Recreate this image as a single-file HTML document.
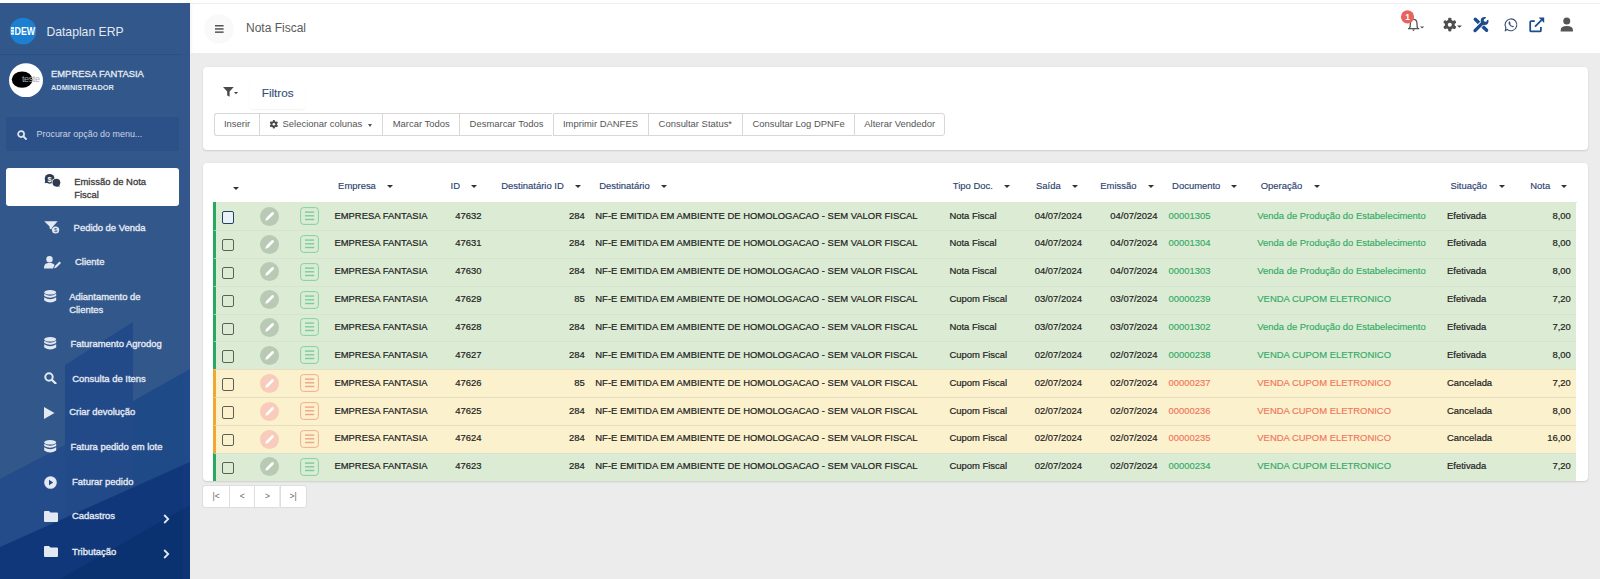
<!DOCTYPE html><html><head><meta charset="utf-8"><style>
*{box-sizing:border-box;margin:0;padding:0}
html,body{width:1600px;height:579px;overflow:hidden;background:#ececec;font-family:"Liberation Sans",sans-serif;position:relative}
.a{position:absolute;white-space:nowrap}
#top{left:0;top:0;width:1600px;height:3px;background:#fff}
#side{left:0;top:3px;width:190px;height:576px;background:#32588c;overflow:hidden}
#hdr{left:190px;top:2.5px;width:1410px;height:50px;background:#fff;border-top:1px solid #eeeeee;box-shadow:inset 4px 0 4px -3px rgba(0,0,0,.06)}
.panel{background:#fff;border-radius:4px;box-shadow:0 1px 2px rgba(0,0,0,.12),0 0 1px rgba(0,0,0,.08)}
.side-t{color:#e3e9f2;font-size:9.45px;-webkit-text-stroke:0.35px #e3e9f2}
.btn{top:113.2px;height:22.4px;border:1px solid #d7d7d7;border-right:none;background:#fff;color:#555;font-size:9.45px;line-height:19.4px;padding:0 9.5px}
.th{top:179.8px;font-size:9.45px;color:#2c4270;line-height:11px;-webkit-text-stroke:0.15px #2c4270}
.caret{width:0;height:0;border-left:3px solid transparent;border-right:3px solid transparent;border-top:3.5px solid #333}
.row{left:213px;width:1363px;height:27.85px}
.row.g{background:#dcecd4;border-left:3px solid #28a861}
.row.y{background:#fbf1cd;border-left:3px solid #f0a830}
.td{font-size:9.45px;color:#222;top:0;line-height:27.85px;margin-top:-0.6px;-webkit-text-stroke:0.2px #222}
.gt{color:#33aa66;-webkit-text-stroke:0.15px #33aa66}
.rt{color:#f2755c;-webkit-text-stroke:0.15px #f2755c}
</style></head><body>
<div class="a" id="top"></div>
<div class="a" id="side">
<svg class="a" style="left:0;top:-3px" width="190" height="579" viewBox="0 0 190 579">
<rect width="190" height="579" fill="#32578b"/>
<polygon points="65,365 133,322 133,579 65,579" fill="#234a88"/>
<polygon points="133,401 190,369 190,579 133,579" fill="#1f4a88"/>
<polygon points="0,479 65,445 65,579 0,579" fill="#254c8a"/>
<polygon points="0,547 190,462 190,579 0,579" fill="#10377a"/>
<polygon points="60,579 190,505 190,579" fill="#0b3270"/>
<rect x="182.5" y="0" width="7.5" height="579" fill="#3a4fa0" opacity="0.08"/>
</svg>
</div>
<svg class="a" style="left:0;top:0" width="50" height="50" viewBox="0 0 50 50"><circle cx="23" cy="31" r="13.3" fill="#1b80d2"/><rect x="10.9" y="27.1" width="3.1" height="7.6" fill="#eef4fb"/><rect x="10.9" y="29.3" width="3.1" height="0.6" fill="#1b80d2"/><rect x="10.9" y="31.8" width="3.1" height="0.6" fill="#1b80d2"/><text x="0" y="0" font-size="10.4" font-family="Liberation Sans" font-weight="bold" fill="#fff" transform="translate(14.5 34.65) scale(0.85 1)">DEW</text></svg>
<div class="a" style="left:46.4px;top:24.7px;font-size:12.2px;line-height:14px;color:#e2e9f3">Dataplan ERP</div>
<div class="a" style="left:0;top:53.5px;width:182px;height:1px;background:#2a5088"></div>
<svg class="a" style="left:9px;top:62.6px" width="34" height="34.5" viewBox="0 0 34 34.5"><circle cx="17" cy="17.2" r="17" fill="#fff"/><ellipse cx="13.1" cy="16.6" rx="10.3" ry="8.2" fill="#000"/><text x="13" y="19.4" font-size="9" font-family="Liberation Sans" fill="#a8a8a8" letter-spacing="-0.4">teste</text></svg>
<div class="a" style="left:51px;top:68px;font-size:9.42px;line-height:12px;color:#e6ecf4;-webkit-text-stroke:0.3px #e6ecf4">EMPRESA FANTASIA</div>
<div class="a" style="left:51px;top:82.5px;font-size:7.4px;font-weight:bold;line-height:10px;color:#dfe6f0">ADMINISTRADOR</div>
<div class="a" style="left:6px;top:117px;width:173px;height:34px;background:#2c5189;border-radius:2px"></div>
<svg class="a" style="left:16.5px;top:130px" width="10" height="10" viewBox="0 0 10 10"><circle cx="4.1" cy="4.1" r="3" fill="none" stroke="#dfe6f0" stroke-width="1.7"/><line x1="6.4" y1="6.4" x2="9" y2="9" stroke="#dfe6f0" stroke-width="1.9" stroke-linecap="round"/></svg>
<div class="a" style="left:36.5px;top:129px;font-size:8.95px;line-height:11px;color:#c9d4e3">Procurar opção do menu...</div>
<div class="a" style="left:6.2px;top:168px;width:172.5px;height:38px;background:#fff;border-radius:3px"></div>
<svg class="a" style="left:38px;top:168px" width="30" height="25" viewBox="0 0 30 25"><circle cx="11.65" cy="10.8" r="4.9" fill="#2f3b4f"/><path d="M7.5 12.5 L6.6 15.2 L10 14.5z" fill="#2f3b4f"/><circle cx="18.4" cy="14.6" r="4.6" fill="#fff"/><circle cx="18.4" cy="14.6" r="3.9" fill="#2f3b4f"/><path d="M20.5 17 L22.2 18.6 L17.5 18.4z" fill="#2f3b4f"/><text x="11.7" y="13.6" font-size="7.5" font-family="Liberation Sans" font-weight="bold" fill="#fff" text-anchor="middle">$</text></svg>
<div class="a" style="left:74.2px;top:175px;font-size:9.45px;line-height:13px;color:#3d3d3d;-webkit-text-stroke:0.3px #3d3d3d;white-space:normal;width:80px">Emissão de Nota Fiscal</div>
<div class="a side-t" style="left:73.6px;top:221.0px;line-height:13.6px">Pedido de Venda</div>
<svg class="a" style="left:44px;top:219.5px" width="17" height="15" viewBox="0 0 17 15"><path d="M0.2 1.2 H13.6 L9 6.5 V10.5 L5.6 8.5 V6.5z" fill="#e3e9f2"/><circle cx="11.6" cy="10" r="4.3" fill="#32578b"/><circle cx="11.6" cy="10" r="3.6" fill="#e3e9f2"/><text x="11.6" y="12.4" font-size="6" font-family="Liberation Sans" fill="#32578b" text-anchor="middle">$</text></svg>
<div class="a side-t" style="left:75px;top:255.1px;line-height:13.6px">Cliente</div>
<svg class="a" style="left:44px;top:255.5px" width="17" height="13" viewBox="0 0 17 13"><circle cx="5.5" cy="3.2" r="3.2" fill="#e3e9f2"/><path d="M0 12.5 C0 8 2 7 5.5 7 C8 7 9.5 7.5 10.5 9 L9 12.5z" fill="#e3e9f2"/><path d="M10 12.5 L11 10 L15.5 5.5 L17 7 L12.5 11.5z" fill="#e3e9f2"/></svg>
<div class="a side-t" style="left:69.2px;top:289.90000000000003px;line-height:13.6px">Adiantamento de<br>Clientes</div>
<svg class="a" style="left:43.8px;top:290.0px" width="13" height="13" viewBox="0 0 13 13"><ellipse cx="6.2" cy="2.3" rx="6" ry="2.3" fill="#e3e9f2"/><path d="M0.2 3.8 Q6.2 7.5 12.2 3.8 V6 Q6.2 9.5 0.2 6z" fill="#e3e9f2"/><path d="M0.2 7.3 Q6.2 11 12.2 7.3 V10.5 Q6.2 14.5 0.2 10.5z" fill="#e3e9f2"/></svg>
<div class="a side-t" style="left:70.4px;top:336.6px;line-height:13.6px">Faturamento Agrodog</div>
<svg class="a" style="left:43.8px;top:336.7px" width="13" height="13" viewBox="0 0 13 13"><ellipse cx="6.2" cy="2.3" rx="6" ry="2.3" fill="#e3e9f2"/><path d="M0.2 3.8 Q6.2 7.5 12.2 3.8 V6 Q6.2 9.5 0.2 6z" fill="#e3e9f2"/><path d="M0.2 7.3 Q6.2 11 12.2 7.3 V10.5 Q6.2 14.5 0.2 10.5z" fill="#e3e9f2"/></svg>
<div class="a side-t" style="left:72.3px;top:371.6px;line-height:13.6px">Consulta de Itens</div>
<svg class="a" style="left:44px;top:371.6px" width="14" height="12" viewBox="0 0 14 12"><circle cx="5" cy="5" r="3.7" fill="none" stroke="#e3e9f2" stroke-width="2"/><line x1="8" y1="8" x2="11.5" y2="11.3" stroke="#e3e9f2" stroke-width="2.3" stroke-linecap="round"/></svg>
<div class="a side-t" style="left:69.2px;top:405.40000000000003px;line-height:13.6px">Criar devolução</div>
<svg class="a" style="left:44px;top:407px" width="11" height="12" viewBox="0 0 11 12"><path d="M0 0 L10.5 6 L0 12z" fill="#e3e9f2"/></svg>
<div class="a side-t" style="left:70.6px;top:439.70000000000005px;line-height:13.6px">Fatura pedido em lote</div>
<svg class="a" style="left:43.8px;top:440.0px" width="13" height="13" viewBox="0 0 13 13"><ellipse cx="6.2" cy="2.3" rx="6" ry="2.3" fill="#e3e9f2"/><path d="M0.2 3.8 Q6.2 7.5 12.2 3.8 V6 Q6.2 9.5 0.2 6z" fill="#e3e9f2"/><path d="M0.2 7.3 Q6.2 11 12.2 7.3 V10.5 Q6.2 14.5 0.2 10.5z" fill="#e3e9f2"/></svg>
<div class="a side-t" style="left:72px;top:475.1px;line-height:13.6px">Faturar pedido</div>
<svg class="a" style="left:44.3px;top:475.6px" width="13" height="13" viewBox="0 0 13 13"><circle cx="6.5" cy="6.5" r="6.3" fill="#e3e9f2"/><path d="M5 3.8 L9.2 6.5 L5 9.2z" fill="#24498a"/></svg>
<div class="a side-t" style="left:72px;top:509.4px;line-height:13.6px">Cadastros</div>
<svg class="a" style="left:44.3px;top:511.0px" width="14" height="11" viewBox="0 0 14 11"><path d="M0 1 Q0 0 1 0 H5 L6.5 1.5 H13 Q14 1.5 14 2.5 V10 Q14 11 13 11 H1 Q0 11 0 10z" fill="#e3e9f2"/></svg>
<div class="a side-t" style="left:72px;top:544.6px;line-height:13.6px">Tributação</div>
<svg class="a" style="left:44.3px;top:545.7px" width="14" height="11" viewBox="0 0 14 11"><path d="M0 1 Q0 0 1 0 H5 L6.5 1.5 H13 Q14 1.5 14 2.5 V10 Q14 11 13 11 H1 Q0 11 0 10z" fill="#e3e9f2"/></svg>
<svg class="a" style="left:162.5px;top:514.3px" width="7" height="10" viewBox="0 0 7 10"><path d="M1.2 1 L5.2 5 L1.2 9" fill="none" stroke="#e3e9f2" stroke-width="1.8"/></svg>
<svg class="a" style="left:162.5px;top:548.6px" width="7" height="10" viewBox="0 0 7 10"><path d="M1.2 1 L5.2 5 L1.2 9" fill="none" stroke="#e3e9f2" stroke-width="1.8"/></svg>
<div class="a" id="hdr"></div>
<div class="a" style="left:205px;top:15px;width:28px;height:28px;border-radius:50%;background:#f9f9f9;box-shadow:0 0 1.5px rgba(0,0,0,.07)"></div>
<svg class="a" style="left:215px;top:25px" width="9" height="8" viewBox="0 0 9 8"><rect x="0" y="0" width="8.6" height="1.5" fill="#555"/><rect x="0" y="3.2" width="8.6" height="1.5" fill="#555"/><rect x="0" y="6.4" width="8.6" height="1.5" fill="#555"/></svg>
<div class="a" style="left:246px;top:21.4px;font-size:12px;line-height:14px;color:#5a5a5a">Nota Fiscal</div>
<svg class="a" style="left:1395px;top:5px" width="185" height="35" viewBox="1395 5 185 35"><path d="M1408 28.6 H1419.3 M1409.6 28.3 Q1410.3 27 1410.3 24 Q1410.3 19.3 1413.6 19.3 Q1417 19.3 1417 24 Q1417 27 1417.7 28.3" fill="none" stroke="#555" stroke-width="1.3"/><path d="M1412 29.6 H1415 L1413.5 31.2z" fill="#555"/><path d="M1420 26.4 H1424.2 L1422.1 28.5z" fill="#555"/><circle cx="1407.5" cy="16.85" r="6.6" fill="#e9635e"/><text x="1407.6" y="19.9" font-size="8.5" font-family="Liberation Sans" font-weight="bold" fill="#fff" text-anchor="middle">1</text><circle cx="1449.8" cy="24.65" r="4.9" fill="#4f4f4f"/><rect x="1448.1499999999999" y="17.849999999999998" width="3.3" height="13.6" rx="1.1549999999999998" fill="#4f4f4f" transform="rotate(0 1449.8 24.65)"/><rect x="1448.1499999999999" y="17.849999999999998" width="3.3" height="13.6" rx="1.1549999999999998" fill="#4f4f4f" transform="rotate(60 1449.8 24.65)"/><rect x="1448.1499999999999" y="17.849999999999998" width="3.3" height="13.6" rx="1.1549999999999998" fill="#4f4f4f" transform="rotate(120 1449.8 24.65)"/><circle cx="1449.8" cy="24.65" r="2.0" fill="#fff"/><path d="M1457 25.4 H1461.9 L1459.45 27.8z" fill="#444"/><line x1="1475.3" y1="19.3" x2="1486.6" y2="30.2" stroke="#1b4c8c" stroke-width="3.4" stroke-linecap="round"/><line x1="1476" y1="29.5" x2="1483.5" y2="22" stroke="#fff" stroke-width="5.2"/><line x1="1475" y1="30.6" x2="1483" y2="22.6" stroke="#1b4c8c" stroke-width="3.3" stroke-linecap="round"/><circle cx="1484.6" cy="21" r="3.9" fill="#1b4c8c"/><circle cx="1485.4" cy="20.2" r="1.6" fill="#fff"/><path d="M1485 20.6 L1486.3 16.2 L1490 16.2 L1490 19.6z" fill="#fff"/><path d="M1507.2 29.4 A5.9 5.9 0 1 0 1505.9 27.9 L1505.3 30.9 z" fill="none" stroke="#3b4f72" stroke-width="1.15" stroke-linejoin="round"/><path d="M1509.2 21.6 Q1508.2 22.3 1508.6 23.8 Q1509.6 26.2 1512.2 27.1 Q1513.4 27.4 1514 26.6 L1513 25.7 L1512.3 26.1 Q1510.9 25.4 1510.2 24 L1510.6 23.3 L1509.9 21.6z" fill="#3b4f72"/><path d="M1534.8 21 H1531.2 Q1530.2 21 1530.2 22 V30.4 Q1530.2 31.4 1531.2 31.4 H1539.9 Q1540.9 31.4 1540.9 30.4 V27" fill="none" stroke="#1b4d90" stroke-width="1.75"/><line x1="1535" y1="26.7" x2="1541.5" y2="20.2" stroke="#1b4d90" stroke-width="1.75"/><path d="M1538.6 17.4 H1544.2 V23z" fill="#1b4d90"/><circle cx="1566.75" cy="21" r="3.5" fill="#555"/><path d="M1560.7 31.6 V30.2 Q1560.7 26 1566.8 26 Q1572.9 26 1572.9 30.2 V31.6z" fill="#555"/></svg>
<div class="a panel" style="left:202.5px;top:67px;width:1385.5px;height:83px"></div>
<svg class="a" style="left:223px;top:87px" width="16" height="10" viewBox="0 0 16 10"><path d="M0 0 H10.8 L6.6 4.6 V9.8 L4.2 8.4 V4.6z" fill="#4a4a4a"/><path d="M10.9 5 H15.1 L13 7.3z" fill="#4a4a4a"/></svg>
<div class="a" style="left:249.3px;top:79.5px;width:56.2px;height:29.2px;border-radius:4px;background:#fff;box-shadow:0 1px 1.5px rgba(0,0,0,.05)"></div>
<div class="a" style="left:261.8px;top:85.6px;font-size:11.68px;line-height:14px;color:#34507a;-webkit-text-stroke:0.15px #34507a">Filtros</div>
<div class="a btn" style="left:213.5px;width:45.69999999999999px;border-radius:3px 0 0 3px;">Inserir</div>
<div class="a btn" style="left:259.2px;width:123.0px;"><svg style="position:absolute;left:0;top:0" width="30" height="21" viewBox="0 0 30 21"><circle cx="13.85" cy="10.25" r="3.1" fill="#4d4d4d"/><rect x="12.799999999999999" y="5.95" width="2.1" height="8.6" rx="0.735" fill="#4d4d4d" transform="rotate(0 13.85 10.25)"/><rect x="12.799999999999999" y="5.95" width="2.1" height="8.6" rx="0.735" fill="#4d4d4d" transform="rotate(60 13.85 10.25)"/><rect x="12.799999999999999" y="5.95" width="2.1" height="8.6" rx="0.735" fill="#4d4d4d" transform="rotate(120 13.85 10.25)"/><circle cx="13.85" cy="10.25" r="1.3" fill="#fff"/></svg><span style="position:absolute;left:22.4px;top:0.3px">Selecionar colunas</span><span style="position:absolute;left:108px;top:9.5px;width:0;height:0;border-left:2.5px solid transparent;border-right:2.5px solid transparent;border-top:3px solid #555"></span></div>
<div class="a btn" style="left:382.2px;width:76.90000000000003px;">Marcar Todos</div>
<div class="a btn" style="left:459.1px;width:93.39999999999998px;">Desmarcar Todos</div>
<div class="a btn" style="left:552.5px;width:95.60000000000002px;">Imprimir DANFES</div>
<div class="a btn" style="left:648.1px;width:93.89999999999998px;">Consultar Status*</div>
<div class="a btn" style="left:742px;width:111.75px;">Consultar Log DPNFe</div>
<div class="a btn" style="left:853.75px;width:91.25px;border-right:1px solid #d7d7d7;border-radius:0 3px 3px 0;">Alterar Vendedor</div>
<div class="a panel" style="left:202.5px;top:163px;width:1385.5px;height:318px"></div>
<div class="a" style="left:213px;top:201.6px;width:1363.5px;height:1px;background:#e4e4e4"></div>
<div class="a caret" style="left:233px;top:187px"></div>
<div class="a th" style="left:338.1px">Empresa</div>
<div class="a caret" style="left:387px;top:184.5px"></div>
<div class="a th" style="left:450.6px">ID</div>
<div class="a caret" style="left:471px;top:184.5px"></div>
<div class="a th" style="left:501.3px">Destinatário ID</div>
<div class="a caret" style="left:574.8px;top:184.5px"></div>
<div class="a th" style="left:599.3px">Destinatário</div>
<div class="a caret" style="left:661px;top:184.5px"></div>
<div class="a th" style="left:952.75px">Tipo Doc.</div>
<div class="a caret" style="left:1003.6px;top:184.5px"></div>
<div class="a th" style="left:1036px">Saída</div>
<div class="a caret" style="left:1071.6px;top:184.5px"></div>
<div class="a th" style="left:1100.3px">Emissão</div>
<div class="a caret" style="left:1148px;top:184.5px"></div>
<div class="a th" style="left:1172.1px">Documento</div>
<div class="a caret" style="left:1231.4px;top:184.5px"></div>
<div class="a th" style="left:1260.7px">Operação</div>
<div class="a caret" style="left:1313.5px;top:184.5px"></div>
<div class="a th" style="left:1450.4px">Situação</div>
<div class="a caret" style="left:1498.5px;top:184.5px"></div>
<div class="a th" style="left:1530.3px">Nota</div>
<div class="a caret" style="left:1561px;top:184.5px"></div>
<div class="a row g" style="top:202.20px;border-top:0 solid #d6e3cf"></div>
<div class="a" style="left:221.8px;top:211.20px;width:12.4px;height:12.4px;border:1.9px solid #263f63;border-radius:2px;background:#e8f1f6"></div>
<svg class="a" style="left:260px;top:206.70px" width="19" height="19" viewBox="0 0 19 19"><circle cx="9.5" cy="9.5" r="9.5" fill="#b8c9b4"/><path d="M5.3 13.7 L6.1 11 L11.8 5.3 Q12.5 4.6 13.2 5.3 L13.7 5.8 Q14.4 6.5 13.7 7.2 L8 12.9z" fill="#fff"/></svg>
<svg class="a" style="left:300px;top:207.00px" width="19" height="18" viewBox="0 0 19 18"><rect x="0.6" y="0.6" width="17.8" height="16.8" rx="3" fill="none" stroke="#79cd9c" stroke-width="0.9"/><rect x="5" y="4.4" width="9.2" height="1.4" fill="#79cd9c"/><rect x="5" y="8.1" width="9.2" height="1.4" fill="#79cd9c"/><rect x="5" y="11.8" width="9.2" height="1.4" fill="#79cd9c"/></svg>
<div class="a td " style="left:334.4px;top:202.20px">EMPRESA FANTASIA</div>
<div class="a td " style="left:455.3px;top:202.20px">47632</div>
<div class="a td" style="right:1015.3px;top:202.20px">284</div>
<div class="a td " style="left:595.3px;top:202.20px">NF-E EMITIDA EM AMBIENTE DE HOMOLOGACAO - SEM VALOR FISCAL</div>
<div class="a td " style="left:949.4px;top:202.20px">Nota Fiscal</div>
<div class="a td " style="left:1034.7px;top:202.20px">04/07/2024</div>
<div class="a td" style="right:442.5px;top:202.20px">04/07/2024</div>
<div class="a td gt" style="left:1168.4px;top:202.20px">00001305</div>
<div class="a td gt" style="left:1257.3px;top:202.20px">Venda de Produção do Estabelecimento</div>
<div class="a td " style="left:1447px;top:202.20px">Efetivada</div>
<div class="a td" style="right:29.200000000000045px;top:202.20px">8,00</div>
<div class="a row g" style="top:230.05px;border-top:1px solid #d6e3cf"></div>
<div class="a" style="left:221.8px;top:239.05px;width:12.4px;height:12.4px;border:1.9px solid #5c6158;border-radius:2px;background:transparent"></div>
<svg class="a" style="left:260px;top:234.55px" width="19" height="19" viewBox="0 0 19 19"><circle cx="9.5" cy="9.5" r="9.5" fill="#b8c9b4"/><path d="M5.3 13.7 L6.1 11 L11.8 5.3 Q12.5 4.6 13.2 5.3 L13.7 5.8 Q14.4 6.5 13.7 7.2 L8 12.9z" fill="#fff"/></svg>
<svg class="a" style="left:300px;top:234.85px" width="19" height="18" viewBox="0 0 19 18"><rect x="0.6" y="0.6" width="17.8" height="16.8" rx="3" fill="none" stroke="#79cd9c" stroke-width="0.9"/><rect x="5" y="4.4" width="9.2" height="1.4" fill="#79cd9c"/><rect x="5" y="8.1" width="9.2" height="1.4" fill="#79cd9c"/><rect x="5" y="11.8" width="9.2" height="1.4" fill="#79cd9c"/></svg>
<div class="a td " style="left:334.4px;top:230.05px">EMPRESA FANTASIA</div>
<div class="a td " style="left:455.3px;top:230.05px">47631</div>
<div class="a td" style="right:1015.3px;top:230.05px">284</div>
<div class="a td " style="left:595.3px;top:230.05px">NF-E EMITIDA EM AMBIENTE DE HOMOLOGACAO - SEM VALOR FISCAL</div>
<div class="a td " style="left:949.4px;top:230.05px">Nota Fiscal</div>
<div class="a td " style="left:1034.7px;top:230.05px">04/07/2024</div>
<div class="a td" style="right:442.5px;top:230.05px">04/07/2024</div>
<div class="a td gt" style="left:1168.4px;top:230.05px">00001304</div>
<div class="a td gt" style="left:1257.3px;top:230.05px">Venda de Produção do Estabelecimento</div>
<div class="a td " style="left:1447px;top:230.05px">Efetivada</div>
<div class="a td" style="right:29.200000000000045px;top:230.05px">8,00</div>
<div class="a row g" style="top:257.90px;border-top:1px solid #d6e3cf"></div>
<div class="a" style="left:221.8px;top:266.90px;width:12.4px;height:12.4px;border:1.9px solid #5c6158;border-radius:2px;background:transparent"></div>
<svg class="a" style="left:260px;top:262.40px" width="19" height="19" viewBox="0 0 19 19"><circle cx="9.5" cy="9.5" r="9.5" fill="#b8c9b4"/><path d="M5.3 13.7 L6.1 11 L11.8 5.3 Q12.5 4.6 13.2 5.3 L13.7 5.8 Q14.4 6.5 13.7 7.2 L8 12.9z" fill="#fff"/></svg>
<svg class="a" style="left:300px;top:262.70px" width="19" height="18" viewBox="0 0 19 18"><rect x="0.6" y="0.6" width="17.8" height="16.8" rx="3" fill="none" stroke="#79cd9c" stroke-width="0.9"/><rect x="5" y="4.4" width="9.2" height="1.4" fill="#79cd9c"/><rect x="5" y="8.1" width="9.2" height="1.4" fill="#79cd9c"/><rect x="5" y="11.8" width="9.2" height="1.4" fill="#79cd9c"/></svg>
<div class="a td " style="left:334.4px;top:257.90px">EMPRESA FANTASIA</div>
<div class="a td " style="left:455.3px;top:257.90px">47630</div>
<div class="a td" style="right:1015.3px;top:257.90px">284</div>
<div class="a td " style="left:595.3px;top:257.90px">NF-E EMITIDA EM AMBIENTE DE HOMOLOGACAO - SEM VALOR FISCAL</div>
<div class="a td " style="left:949.4px;top:257.90px">Nota Fiscal</div>
<div class="a td " style="left:1034.7px;top:257.90px">04/07/2024</div>
<div class="a td" style="right:442.5px;top:257.90px">04/07/2024</div>
<div class="a td gt" style="left:1168.4px;top:257.90px">00001303</div>
<div class="a td gt" style="left:1257.3px;top:257.90px">Venda de Produção do Estabelecimento</div>
<div class="a td " style="left:1447px;top:257.90px">Efetivada</div>
<div class="a td" style="right:29.200000000000045px;top:257.90px">8,00</div>
<div class="a row g" style="top:285.75px;border-top:1px solid #d6e3cf"></div>
<div class="a" style="left:221.8px;top:294.75px;width:12.4px;height:12.4px;border:1.9px solid #5c6158;border-radius:2px;background:transparent"></div>
<svg class="a" style="left:260px;top:290.25px" width="19" height="19" viewBox="0 0 19 19"><circle cx="9.5" cy="9.5" r="9.5" fill="#b8c9b4"/><path d="M5.3 13.7 L6.1 11 L11.8 5.3 Q12.5 4.6 13.2 5.3 L13.7 5.8 Q14.4 6.5 13.7 7.2 L8 12.9z" fill="#fff"/></svg>
<svg class="a" style="left:300px;top:290.55px" width="19" height="18" viewBox="0 0 19 18"><rect x="0.6" y="0.6" width="17.8" height="16.8" rx="3" fill="none" stroke="#79cd9c" stroke-width="0.9"/><rect x="5" y="4.4" width="9.2" height="1.4" fill="#79cd9c"/><rect x="5" y="8.1" width="9.2" height="1.4" fill="#79cd9c"/><rect x="5" y="11.8" width="9.2" height="1.4" fill="#79cd9c"/></svg>
<div class="a td " style="left:334.4px;top:285.75px">EMPRESA FANTASIA</div>
<div class="a td " style="left:455.3px;top:285.75px">47629</div>
<div class="a td" style="right:1015.3px;top:285.75px">85</div>
<div class="a td " style="left:595.3px;top:285.75px">NF-E EMITIDA EM AMBIENTE DE HOMOLOGACAO - SEM VALOR FISCAL</div>
<div class="a td " style="left:949.4px;top:285.75px">Cupom Fiscal</div>
<div class="a td " style="left:1034.7px;top:285.75px">03/07/2024</div>
<div class="a td" style="right:442.5px;top:285.75px">03/07/2024</div>
<div class="a td gt" style="left:1168.4px;top:285.75px">00000239</div>
<div class="a td gt" style="left:1257.3px;top:285.75px">VENDA CUPOM ELETRONICO</div>
<div class="a td " style="left:1447px;top:285.75px">Efetivada</div>
<div class="a td" style="right:29.200000000000045px;top:285.75px">7,20</div>
<div class="a row g" style="top:313.60px;border-top:1px solid #d6e3cf"></div>
<div class="a" style="left:221.8px;top:322.60px;width:12.4px;height:12.4px;border:1.9px solid #5c6158;border-radius:2px;background:transparent"></div>
<svg class="a" style="left:260px;top:318.10px" width="19" height="19" viewBox="0 0 19 19"><circle cx="9.5" cy="9.5" r="9.5" fill="#b8c9b4"/><path d="M5.3 13.7 L6.1 11 L11.8 5.3 Q12.5 4.6 13.2 5.3 L13.7 5.8 Q14.4 6.5 13.7 7.2 L8 12.9z" fill="#fff"/></svg>
<svg class="a" style="left:300px;top:318.40px" width="19" height="18" viewBox="0 0 19 18"><rect x="0.6" y="0.6" width="17.8" height="16.8" rx="3" fill="none" stroke="#79cd9c" stroke-width="0.9"/><rect x="5" y="4.4" width="9.2" height="1.4" fill="#79cd9c"/><rect x="5" y="8.1" width="9.2" height="1.4" fill="#79cd9c"/><rect x="5" y="11.8" width="9.2" height="1.4" fill="#79cd9c"/></svg>
<div class="a td " style="left:334.4px;top:313.60px">EMPRESA FANTASIA</div>
<div class="a td " style="left:455.3px;top:313.60px">47628</div>
<div class="a td" style="right:1015.3px;top:313.60px">284</div>
<div class="a td " style="left:595.3px;top:313.60px">NF-E EMITIDA EM AMBIENTE DE HOMOLOGACAO - SEM VALOR FISCAL</div>
<div class="a td " style="left:949.4px;top:313.60px">Nota Fiscal</div>
<div class="a td " style="left:1034.7px;top:313.60px">03/07/2024</div>
<div class="a td" style="right:442.5px;top:313.60px">03/07/2024</div>
<div class="a td gt" style="left:1168.4px;top:313.60px">00001302</div>
<div class="a td gt" style="left:1257.3px;top:313.60px">Venda de Produção do Estabelecimento</div>
<div class="a td " style="left:1447px;top:313.60px">Efetivada</div>
<div class="a td" style="right:29.200000000000045px;top:313.60px">7,20</div>
<div class="a row g" style="top:341.45px;border-top:1px solid #d6e3cf"></div>
<div class="a" style="left:221.8px;top:350.45px;width:12.4px;height:12.4px;border:1.9px solid #5c6158;border-radius:2px;background:transparent"></div>
<svg class="a" style="left:260px;top:345.95px" width="19" height="19" viewBox="0 0 19 19"><circle cx="9.5" cy="9.5" r="9.5" fill="#b8c9b4"/><path d="M5.3 13.7 L6.1 11 L11.8 5.3 Q12.5 4.6 13.2 5.3 L13.7 5.8 Q14.4 6.5 13.7 7.2 L8 12.9z" fill="#fff"/></svg>
<svg class="a" style="left:300px;top:346.25px" width="19" height="18" viewBox="0 0 19 18"><rect x="0.6" y="0.6" width="17.8" height="16.8" rx="3" fill="none" stroke="#79cd9c" stroke-width="0.9"/><rect x="5" y="4.4" width="9.2" height="1.4" fill="#79cd9c"/><rect x="5" y="8.1" width="9.2" height="1.4" fill="#79cd9c"/><rect x="5" y="11.8" width="9.2" height="1.4" fill="#79cd9c"/></svg>
<div class="a td " style="left:334.4px;top:341.45px">EMPRESA FANTASIA</div>
<div class="a td " style="left:455.3px;top:341.45px">47627</div>
<div class="a td" style="right:1015.3px;top:341.45px">284</div>
<div class="a td " style="left:595.3px;top:341.45px">NF-E EMITIDA EM AMBIENTE DE HOMOLOGACAO - SEM VALOR FISCAL</div>
<div class="a td " style="left:949.4px;top:341.45px">Cupom Fiscal</div>
<div class="a td " style="left:1034.7px;top:341.45px">02/07/2024</div>
<div class="a td" style="right:442.5px;top:341.45px">02/07/2024</div>
<div class="a td gt" style="left:1168.4px;top:341.45px">00000238</div>
<div class="a td gt" style="left:1257.3px;top:341.45px">VENDA CUPOM ELETRONICO</div>
<div class="a td " style="left:1447px;top:341.45px">Efetivada</div>
<div class="a td" style="right:29.200000000000045px;top:341.45px">8,00</div>
<div class="a row y" style="top:369.30px;border-top:1px solid #e6dcc0"></div>
<div class="a" style="left:221.8px;top:378.30px;width:12.4px;height:12.4px;border:1.9px solid #5c6158;border-radius:2px;background:transparent"></div>
<svg class="a" style="left:260px;top:373.80px" width="19" height="19" viewBox="0 0 19 19"><circle cx="9.5" cy="9.5" r="9.5" fill="#f8cbbb"/><path d="M5.3 13.7 L6.1 11 L11.8 5.3 Q12.5 4.6 13.2 5.3 L13.7 5.8 Q14.4 6.5 13.7 7.2 L8 12.9z" fill="#fff"/></svg>
<svg class="a" style="left:300px;top:374.10px" width="19" height="18" viewBox="0 0 19 18"><rect x="0.6" y="0.6" width="17.8" height="16.8" rx="3" fill="none" stroke="#f0a487" stroke-width="0.9"/><rect x="5" y="4.4" width="9.2" height="1.4" fill="#f0a487"/><rect x="5" y="8.1" width="9.2" height="1.4" fill="#f0a487"/><rect x="5" y="11.8" width="9.2" height="1.4" fill="#f0a487"/></svg>
<div class="a td " style="left:334.4px;top:369.30px">EMPRESA FANTASIA</div>
<div class="a td " style="left:455.3px;top:369.30px">47626</div>
<div class="a td" style="right:1015.3px;top:369.30px">85</div>
<div class="a td " style="left:595.3px;top:369.30px">NF-E EMITIDA EM AMBIENTE DE HOMOLOGACAO - SEM VALOR FISCAL</div>
<div class="a td " style="left:949.4px;top:369.30px">Cupom Fiscal</div>
<div class="a td " style="left:1034.7px;top:369.30px">02/07/2024</div>
<div class="a td" style="right:442.5px;top:369.30px">02/07/2024</div>
<div class="a td rt" style="left:1168.4px;top:369.30px">00000237</div>
<div class="a td rt" style="left:1257.3px;top:369.30px">VENDA CUPOM ELETRONICO</div>
<div class="a td " style="left:1447px;top:369.30px">Cancelada</div>
<div class="a td" style="right:29.200000000000045px;top:369.30px">7,20</div>
<div class="a row y" style="top:397.15px;border-top:1px solid #e6dcc0"></div>
<div class="a" style="left:221.8px;top:406.15px;width:12.4px;height:12.4px;border:1.9px solid #5c6158;border-radius:2px;background:transparent"></div>
<svg class="a" style="left:260px;top:401.65px" width="19" height="19" viewBox="0 0 19 19"><circle cx="9.5" cy="9.5" r="9.5" fill="#f8cbbb"/><path d="M5.3 13.7 L6.1 11 L11.8 5.3 Q12.5 4.6 13.2 5.3 L13.7 5.8 Q14.4 6.5 13.7 7.2 L8 12.9z" fill="#fff"/></svg>
<svg class="a" style="left:300px;top:401.95px" width="19" height="18" viewBox="0 0 19 18"><rect x="0.6" y="0.6" width="17.8" height="16.8" rx="3" fill="none" stroke="#f0a487" stroke-width="0.9"/><rect x="5" y="4.4" width="9.2" height="1.4" fill="#f0a487"/><rect x="5" y="8.1" width="9.2" height="1.4" fill="#f0a487"/><rect x="5" y="11.8" width="9.2" height="1.4" fill="#f0a487"/></svg>
<div class="a td " style="left:334.4px;top:397.15px">EMPRESA FANTASIA</div>
<div class="a td " style="left:455.3px;top:397.15px">47625</div>
<div class="a td" style="right:1015.3px;top:397.15px">284</div>
<div class="a td " style="left:595.3px;top:397.15px">NF-E EMITIDA EM AMBIENTE DE HOMOLOGACAO - SEM VALOR FISCAL</div>
<div class="a td " style="left:949.4px;top:397.15px">Cupom Fiscal</div>
<div class="a td " style="left:1034.7px;top:397.15px">02/07/2024</div>
<div class="a td" style="right:442.5px;top:397.15px">02/07/2024</div>
<div class="a td rt" style="left:1168.4px;top:397.15px">00000236</div>
<div class="a td rt" style="left:1257.3px;top:397.15px">VENDA CUPOM ELETRONICO</div>
<div class="a td " style="left:1447px;top:397.15px">Cancelada</div>
<div class="a td" style="right:29.200000000000045px;top:397.15px">8,00</div>
<div class="a row y" style="top:425.00px;border-top:1px solid #e6dcc0"></div>
<div class="a" style="left:221.8px;top:434.00px;width:12.4px;height:12.4px;border:1.9px solid #5c6158;border-radius:2px;background:transparent"></div>
<svg class="a" style="left:260px;top:429.50px" width="19" height="19" viewBox="0 0 19 19"><circle cx="9.5" cy="9.5" r="9.5" fill="#f8cbbb"/><path d="M5.3 13.7 L6.1 11 L11.8 5.3 Q12.5 4.6 13.2 5.3 L13.7 5.8 Q14.4 6.5 13.7 7.2 L8 12.9z" fill="#fff"/></svg>
<svg class="a" style="left:300px;top:429.80px" width="19" height="18" viewBox="0 0 19 18"><rect x="0.6" y="0.6" width="17.8" height="16.8" rx="3" fill="none" stroke="#f0a487" stroke-width="0.9"/><rect x="5" y="4.4" width="9.2" height="1.4" fill="#f0a487"/><rect x="5" y="8.1" width="9.2" height="1.4" fill="#f0a487"/><rect x="5" y="11.8" width="9.2" height="1.4" fill="#f0a487"/></svg>
<div class="a td " style="left:334.4px;top:425.00px">EMPRESA FANTASIA</div>
<div class="a td " style="left:455.3px;top:425.00px">47624</div>
<div class="a td" style="right:1015.3px;top:425.00px">284</div>
<div class="a td " style="left:595.3px;top:425.00px">NF-E EMITIDA EM AMBIENTE DE HOMOLOGACAO - SEM VALOR FISCAL</div>
<div class="a td " style="left:949.4px;top:425.00px">Cupom Fiscal</div>
<div class="a td " style="left:1034.7px;top:425.00px">02/07/2024</div>
<div class="a td" style="right:442.5px;top:425.00px">02/07/2024</div>
<div class="a td rt" style="left:1168.4px;top:425.00px">00000235</div>
<div class="a td rt" style="left:1257.3px;top:425.00px">VENDA CUPOM ELETRONICO</div>
<div class="a td " style="left:1447px;top:425.00px">Cancelada</div>
<div class="a td" style="right:29.200000000000045px;top:425.00px">16,00</div>
<div class="a row g" style="top:452.85px;border-top:1px solid #d6e3cf"></div>
<div class="a" style="left:221.8px;top:461.85px;width:12.4px;height:12.4px;border:1.9px solid #5c6158;border-radius:2px;background:transparent"></div>
<svg class="a" style="left:260px;top:457.35px" width="19" height="19" viewBox="0 0 19 19"><circle cx="9.5" cy="9.5" r="9.5" fill="#b8c9b4"/><path d="M5.3 13.7 L6.1 11 L11.8 5.3 Q12.5 4.6 13.2 5.3 L13.7 5.8 Q14.4 6.5 13.7 7.2 L8 12.9z" fill="#fff"/></svg>
<svg class="a" style="left:300px;top:457.65px" width="19" height="18" viewBox="0 0 19 18"><rect x="0.6" y="0.6" width="17.8" height="16.8" rx="3" fill="none" stroke="#79cd9c" stroke-width="0.9"/><rect x="5" y="4.4" width="9.2" height="1.4" fill="#79cd9c"/><rect x="5" y="8.1" width="9.2" height="1.4" fill="#79cd9c"/><rect x="5" y="11.8" width="9.2" height="1.4" fill="#79cd9c"/></svg>
<div class="a td " style="left:334.4px;top:452.85px">EMPRESA FANTASIA</div>
<div class="a td " style="left:455.3px;top:452.85px">47623</div>
<div class="a td" style="right:1015.3px;top:452.85px">284</div>
<div class="a td " style="left:595.3px;top:452.85px">NF-E EMITIDA EM AMBIENTE DE HOMOLOGACAO - SEM VALOR FISCAL</div>
<div class="a td " style="left:949.4px;top:452.85px">Cupom Fiscal</div>
<div class="a td " style="left:1034.7px;top:452.85px">02/07/2024</div>
<div class="a td" style="right:442.5px;top:452.85px">02/07/2024</div>
<div class="a td gt" style="left:1168.4px;top:452.85px">00000234</div>
<div class="a td gt" style="left:1257.3px;top:452.85px">VENDA CUPOM ELETRONICO</div>
<div class="a td " style="left:1447px;top:452.85px">Efetivada</div>
<div class="a td" style="right:29.200000000000045px;top:452.85px">7,20</div>
<div class="a" style="left:202.4px;top:485.3px;width:26.599999999999994px;height:22.3px;background:#fff;border:1px solid #dedede;border-right:none;border-radius:3px 0 0 3px;font-size:8.5px;line-height:20px;text-align:center;color:#666">|&lt;</div>
<div class="a" style="left:229px;top:485.3px;width:25.30000000000001px;height:22.3px;background:#fff;border:1px solid #dedede;border-right:none;font-size:8.5px;line-height:20px;text-align:center;color:#666">&lt;</div>
<div class="a" style="left:254.3px;top:485.3px;width:25.19999999999999px;height:22.3px;background:#fff;border:1px solid #dedede;border-right:none;font-size:8.5px;line-height:20px;text-align:center;color:#666">&gt;</div>
<div class="a" style="left:279.5px;top:485.3px;width:27.100000000000023px;height:22.3px;background:#fff;border:1px solid #dedede;border-right:none;border-right:1px solid #ddd;border-radius:0 3px 3px 0;font-size:8.5px;line-height:20px;text-align:center;color:#666">&gt;|</div>
</body></html>
